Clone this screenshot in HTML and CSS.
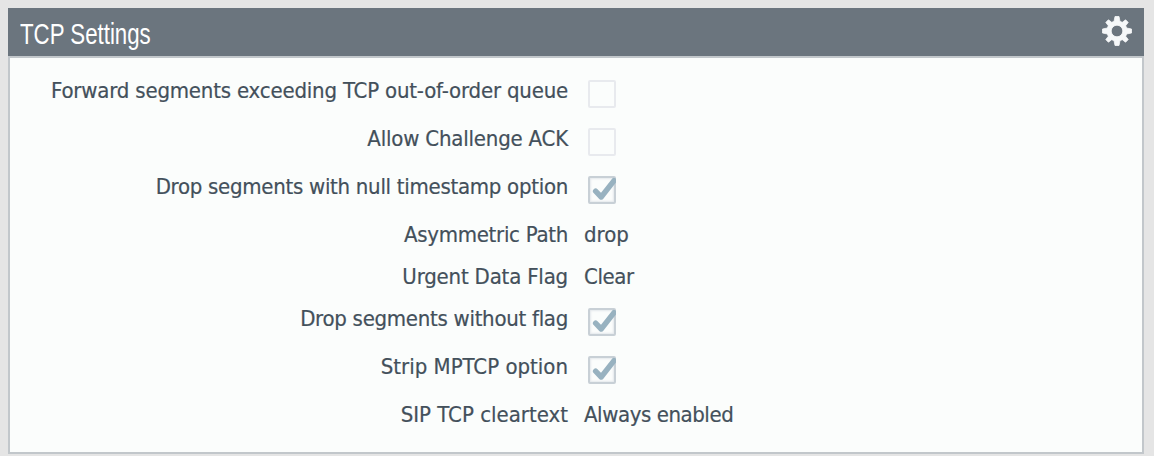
FILE: index.html
```html
<!DOCTYPE html>
<html lang="en">
<head>
<meta charset="utf-8">
<title>TCP Settings</title>
<link rel="stylesheet" href="styles.css">
</head>
<body>
<svg class="defs" width="0" height="0" aria-hidden="true">
  <symbol id="tick" viewBox="0 0 28 28"><path d="M7.6 15.2L13.2 21L26 4.6" fill="none" stroke="#98b2c0" stroke-width="5.4" stroke-linecap="round" stroke-linejoin="round"/></symbol>
</svg>
<section class="panel">
  <header class="panel-header">
    <h1 class="title">TCP Settings</h1>
    <svg class="gear" viewBox="-15 -15 30 30" role="img" aria-label="Edit">
      <path fill="#f6f8f9" stroke="#f6f8f9" stroke-width=".8" stroke-linejoin="round" fill-rule="evenodd" d="M-2-14.5H2L3-9.6L5.3-8.7L8.6-11.2L11.2-8.6L8.7-5.3L9.6-3L14.5-2V2L9.6 3L8.7 5.3L11.2 8.6L8.6 11.2L5.3 8.7L3 9.6L2 14.5H-2L-3 9.6L-5.3 8.7L-8.6 11.2L-11.2 8.6L-8.7 5.3L-9.6 3L-14.5 2V-2L-9.6-3L-8.7-5.3L-11.2-8.6L-8.6-11.2L-5.3-8.7L-3-9.6ZM0-5.8A5.8 5.8 0 1 0 0 5.8A5.8 5.8 0 1 0 0-5.8Z"/>
    </svg>
  </header>
  <dl class="settings">
    <div class="row tall"><dt class="label">Forward segments exceeding TCP out-of-order queue</dt><dd class="value"><span class="box"></span></dd></div>
    <div class="row tall"><dt class="label">Allow Challenge ACK</dt><dd class="value"><span class="box"></span></dd></div>
    <div class="row tall"><dt class="label snug">Drop segments with null timestamp option</dt><dd class="value"><span class="box checked"><svg class="tick"><use href="#tick"/></svg></span></dd></div>
    <div class="row"><dt class="label snug">Asymmetric Path</dt><dd class="value plain">drop</dd></div>
    <div class="row"><dt class="label">Urgent Data Flag</dt><dd class="value tight">Clear</dd></div>
    <div class="row tall"><dt class="label snug">Drop segments without flag</dt><dd class="value"><span class="box checked"><svg class="tick"><use href="#tick"/></svg></span></dd></div>
    <div class="row tall"><dt class="label plain">Strip MPTCP option</dt><dd class="value"><span class="box checked"><svg class="tick"><use href="#tick"/></svg></span></dd></div>
    <div class="row"><dt class="label plain">SIP TCP cleartext</dt><dd class="value tight">Always enabled</dd></div>
  </dl>
</section>
</body>
</html>
```
FILE: styles.css
```css
* { box-sizing: border-box; }
body {
  margin: 0;
  height: 456px;
  padding: 8px 10px 2px 8px;
  overflow: hidden;
  background: #e5e5e5;
}
.defs { display: none; }
.panel { height: 446px; display: flex; flex-direction: column; }
.panel-header {
  flex: none;
  height: 48px;
  display: flex;
  justify-content: space-between;
  background: #6b757e;
  padding: 0 12px;
}
.title {
  margin: 0;
  padding-top: 2px;
  color: #fff;
  font: 400 30px/48px "Liberation Sans Narrow", "Liberation Sans", Arial, sans-serif;
  white-space: nowrap;
  transform: scaleX(0.742);
  transform-origin: left;
}
.gear { width: 30px; height: 30px; margin-top: 8px; }
.settings {
  flex: 1;
  margin: 0;
  padding-top: 12px;
  border: 2px solid #c2c7cb;
  background: #fbfdfc;
  color: #43505b;
  font: 22px/42px "DejaVu Sans Condensed", "DejaVu Sans", Tahoma, sans-serif;
  font-stretch: condensed;
  -webkit-text-stroke: 0.2px #43505b;
}
.row { display: flex; height: 42px; gap: 16px; white-space: nowrap; }
.tall { height: 48px; }
.label { width: 558px; text-align: right; letter-spacing: -0.19px; }
.snug { letter-spacing: -0.28px; }
.value { margin: 0; }
.plain { letter-spacing: 0; }
.tight { letter-spacing: -0.43px; }
.box {
  display: block;
  width: 28px;
  height: 28px;
  margin: 10px 0 0 4px;
  border: 2px solid #e8eaee;
  border-radius: 2px;
}
.checked { border-color: #c8d0d6; box-shadow: inset 0 0 2px 1px #e4e8ec; }
.tick { display: block; width: 28px; height: 28px; margin: -2px; }
```
